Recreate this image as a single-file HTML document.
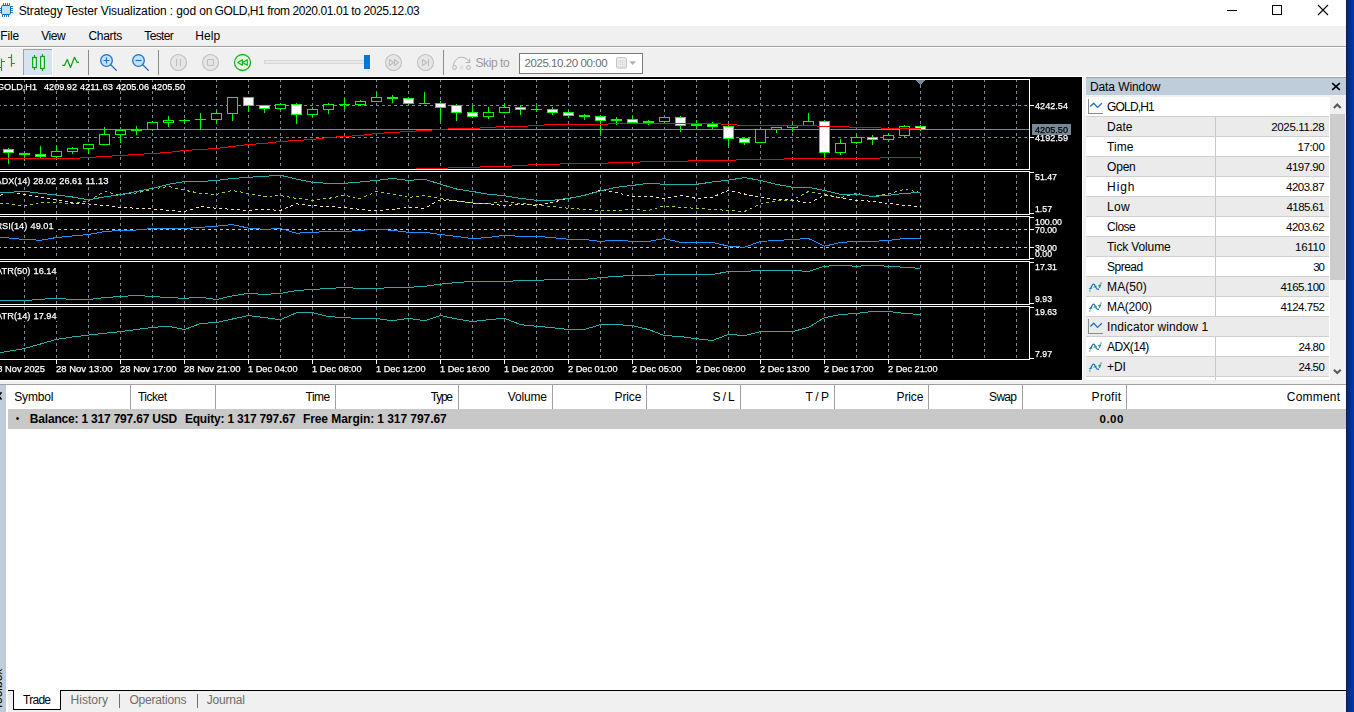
<!DOCTYPE html>
<html lang="en"><head><meta charset="utf-8"><title>Strategy Tester Visualization</title>
<style>
*{box-sizing:border-box;margin:0;padding:0}
html,body{width:1354px;height:712px;overflow:hidden;background:#f0f0f0;font-family:"Liberation Sans",sans-serif;font-size:12px;color:#000}
.a{position:absolute;white-space:nowrap}
.t{position:absolute;white-space:pre;line-height:16px;height:16px;font-size:12px}
#blue{left:1346px;top:0;width:8px;height:712px;background:linear-gradient(90deg,#0f1f4a 0,#0f1f4a 1px,#022a84 1.5px,#0338a2 8px)}
#chart{left:0;top:77px;width:1082px;height:303px;background:#000}
.r{left:1086px;width:243px;height:20px;border-bottom:1px solid #d0d0d0}
.v{width:1px;background:#c8c8c8}
.h{width:1px;height:24px;top:385px;background:#a0a0a0}
</style></head>
<body>
<div class="a" style="left:0px;top:0px;width:1346px;height:26px;background:#fff"></div>
<svg class="a" style="left:0;top:0" width="16" height="20" viewBox="0 0 16 20">
<g fill="none" stroke="#0f66b3" stroke-width="0.9">
<path d="M3.5 3v2M5.500 3v2M7.500 3v2M9.500 3v2M2.500 15v2M4.500 15v2M6.500 15v2M8.500 15v2M11 6.500h2M11 8.500h2M11 10.500h2M11 12.500h2M-1 8.500h2M-1 10.500h2M-1 12.500h2"/>
<rect x="1.500" y="5.500" width="9" height="9" rx="1.200" fill="#bfe0ff" stroke-width="1"/>
</g></svg>
<div class="t" style="left:18.70px;top:3px;letter-spacing:-0.105px">Strategy Tester Visualization : god on</div>
<div class="t" style="left:214.60px;top:3px;letter-spacing:-0.417px">GOLD,H1 from 2020.01.01 to 2025.12.03</div>
<svg class="a" style="left:1220px;top:0" width="126" height="26" viewBox="0 0 126 26" shape-rendering="crispEdges">
<path d="M7 10.5h10" stroke="#000" fill="none"/>
<rect x="52.5" y="5.5" width="9" height="9" stroke="#000" fill="none"/>
<path d="M98 5l10 10M108 5l-10 10" stroke="#000" fill="none" stroke-width="1.1" shape-rendering="geometricPrecision"/>
</svg>
<div class="t" style="left:0.20px;top:28px;letter-spacing:-0.100px">File</div>
<div class="t" style="left:41.20px;top:28px;letter-spacing:-0.400px">View</div>
<div class="t" style="left:88.50px;top:28px;letter-spacing:-0.320px">Charts</div>
<div class="t" style="left:144.30px;top:28px;letter-spacing:-0.660px">Tester</div>
<div class="t" style="left:195.30px;top:28px;letter-spacing:0.100px">Help</div>
<div class="a" style="left:0px;top:46px;width:1346px;height:1px;background:#a0a0a0"></div>
<div class="a" style="left:0px;top:47px;width:1346px;height:1px;background:#fff"></div>
<div class="a" style="left:0px;top:76px;width:1346px;height:1px;background:#fff"></div>
<div class="a" style="left:519px;top:53px;width:124px;height:21px;background:#fff;border:1px solid #7a7a7a"></div>
<svg class="a" style="left:0;top:47px" width="680" height="30" viewBox="0 47 680 30" fill="none">
<!-- bar chart icon -->
<g stroke="#0ea516" stroke-width="1.2">
<path d="M1.5 58.5v12.500M-2 67.500h3.500M1.500 61.500h3.500M11.500 54.300v12.500M8 57.500h3.500M11.500 63.500h3.500"/>
</g>
<!-- selected candle button -->
<rect x="23" y="49" width="29" height="26" fill="#d6e3f1" stroke="none" shape-rendering="crispEdges"/>
<path d="M23.500 75v-25.500h28.500" stroke="#a0a0a0" shape-rendering="crispEdges"/>
<path d="M52.500 49v26.500h-29.500" stroke="#fff" shape-rendering="crispEdges"/>
<g stroke="#0ea516" stroke-width="1.2">
<path d="M34.500 55v2.500M34.500 67.500v2.500M42.500 54v2.500M42.500 68.500v2.500"/>
<rect x="32.600" y="57.500" width="3.800" height="10" fill="#e0f8e0"/>
<rect x="40.600" y="56.500" width="3.800" height="12" fill="#e0f8e0"/>
</g>
<!-- line icon -->
<path d="M62.200 65.400h2.300l2.700-5.800 3.300 8 4-10.300 2.600 5h2" stroke="#0ea516" stroke-width="1.300" stroke-linejoin="round"/>
<!-- separators -->
<g stroke="#8c8c8c" shape-rendering="crispEdges"><path d="M88.500 50v25M158.500 50v25M443.500 50v25"/></g>
<!-- zoom in -->
<g stroke="#1a73c8" stroke-width="1.300">
<circle cx="106.500" cy="60.500" r="5.800" fill="#c4e3fd"/>
<path d="M110.800 64.800l5.600 5.600" stroke-linecap="round"/>
<path d="M103.500 60.500h6M106.500 57.500v6" stroke-width="1.200"/>
<circle cx="138.500" cy="60.500" r="5.800" fill="#c4e3fd"/>
<path d="M142.800 64.800l5.600 5.600" stroke-linecap="round"/>
<path d="M135.500 60.500h6" stroke-width="1.200"/>
</g>
<!-- disabled pause / stop -->
<g stroke="#bebebe" stroke-width="1.100">
<circle cx="178.500" cy="62.500" r="8" fill="#e6e6e6"/>
<path d="M176.500 59v7M180.500 59v7"/>
<circle cx="210.500" cy="62.500" r="8" fill="#e6e6e6"/>
<rect x="207.500" y="59.500" width="6" height="6" rx="1"/>
</g>
<!-- rewind (green) -->
<g stroke="#17b01d" stroke-width="1.100" stroke-linejoin="round">
<circle cx="242.500" cy="62.500" r="8" fill="#e1fae1" stroke-width="1.300"/>
<path d="M242.300 59.700v5.600l-4.600-2.800zM247.300 59.700v5.600l-4.600-2.800z" fill="#d0f5d0"/>
</g>
<!-- slider -->
<rect x="264.500" y="60.500" width="105" height="3" fill="#e7eaea" stroke="#d6d6d6"/>
<rect x="364" y="55" width="6" height="14" fill="#0078d7" shape-rendering="crispEdges"/>
<!-- ff / next disabled -->
<g stroke="#bebebe" stroke-width="1.100" stroke-linejoin="round">
<circle cx="393.500" cy="62.500" r="8" fill="#e6e6e6"/>
<path d="M389.500 59.500v6l4-3zM394.500 59.500v6l4-3z"/>
<circle cx="425.500" cy="62.500" r="8" fill="#e6e6e6"/>
<path d="M422.500 59.500v6l4.500-3zM428.500 59v7"/>
</g>
<!-- skip to icon -->
<g stroke="#b2b2b2" stroke-width="1">
<path d="M453.600 65.300C454 60.500 457.500 57.200 461.500 57.200C465 57.200 467.800 59.300 469.500 62.200"/>
<path d="M469.800 58.500V62.500H465.400"/>
<circle cx="454.500" cy="67.500" r="1.900"/><circle cx="468.500" cy="67.500" r="1.900"/>
<circle cx="461.600" cy="67.500" r="2.200" fill="#e2e2e2" stroke="none"/>
</g>
<!-- calendar icon + arrow -->
<g>
<rect x="616.700" y="57.800" width="9.600" height="10.200" rx="1" fill="#f5f6fb" stroke="#bcb8b8"/>
<rect x="618.200" y="60" width="6.400" height="6.900" fill="#dcdce1"/>
<path d="M619 61.300h1v1h-1zM621 61.300h1v1h-1zM623 61.300h1v1h-1zM619 63.200h1v1h-1zM621 63.200h1v1h-1zM623 63.200h1v1h-1zM619 65.100h1v1h-1zM621 65.100h1v1h-1zM623 65.100h1v1h-1z" fill="#f8f8fc"/>
<path d="M629.200 61.200h6.800l-3.400 3.800z" fill="#b2b2ae"/>
</g>
</svg>

<div class="t" style="left:475.50px;top:55px;letter-spacing:-0.417px;color:#9a9a9a">Skip to</div>
<div class="t" style="left:524.50px;top:55px;letter-spacing:-0.433px;color:#6d6d6d;font-size:11.5px">2025.10.20 00:00</div>
<div id="chart" class="a">
<svg class="a" style="left:0;top:0" width="1082" height="303" viewBox="0 77 1082 303" shape-rendering="crispEdges" font-family="Liberation Sans, sans-serif" font-size="9.600px">
<rect x="0" y="77" width="1082" height="303" fill="#000"/>
<g stroke="#778899" stroke-dasharray="3 3"><line x1="24.5" x2="24.5" y1="80" y2="169" stroke-dashoffset="1"/><line x1="56.5" x2="56.5" y1="80" y2="169" stroke-dashoffset="1"/><line x1="88.5" x2="88.5" y1="80" y2="169" stroke-dashoffset="1"/><line x1="120.5" x2="120.5" y1="80" y2="169" stroke-dashoffset="1"/><line x1="152.5" x2="152.5" y1="80" y2="169" stroke-dashoffset="1"/><line x1="184.5" x2="184.5" y1="80" y2="169" stroke-dashoffset="1"/><line x1="216.5" x2="216.5" y1="80" y2="169" stroke-dashoffset="1"/><line x1="248.5" x2="248.5" y1="80" y2="169" stroke-dashoffset="1"/><line x1="280.5" x2="280.5" y1="80" y2="169" stroke-dashoffset="1"/><line x1="312.5" x2="312.5" y1="80" y2="169" stroke-dashoffset="1"/><line x1="344.5" x2="344.5" y1="80" y2="169" stroke-dashoffset="1"/><line x1="376.5" x2="376.5" y1="80" y2="169" stroke-dashoffset="1"/><line x1="408.5" x2="408.5" y1="80" y2="169" stroke-dashoffset="1"/><line x1="440.5" x2="440.5" y1="80" y2="169" stroke-dashoffset="1"/><line x1="472.5" x2="472.5" y1="80" y2="169" stroke-dashoffset="1"/><line x1="504.5" x2="504.5" y1="80" y2="169" stroke-dashoffset="1"/><line x1="536.5" x2="536.5" y1="80" y2="169" stroke-dashoffset="1"/><line x1="568.5" x2="568.5" y1="80" y2="169" stroke-dashoffset="1"/><line x1="600.5" x2="600.5" y1="80" y2="169" stroke-dashoffset="1"/><line x1="632.5" x2="632.5" y1="80" y2="169" stroke-dashoffset="1"/><line x1="664.5" x2="664.5" y1="80" y2="169" stroke-dashoffset="1"/><line x1="696.5" x2="696.5" y1="80" y2="169" stroke-dashoffset="1"/><line x1="728.5" x2="728.5" y1="80" y2="169" stroke-dashoffset="1"/><line x1="760.5" x2="760.5" y1="80" y2="169" stroke-dashoffset="1"/><line x1="792.5" x2="792.5" y1="80" y2="169" stroke-dashoffset="1"/><line x1="824.5" x2="824.5" y1="80" y2="169" stroke-dashoffset="1"/><line x1="856.5" x2="856.5" y1="80" y2="169" stroke-dashoffset="1"/><line x1="888.5" x2="888.5" y1="80" y2="169" stroke-dashoffset="1"/><line x1="920.5" x2="920.5" y1="80" y2="169" stroke-dashoffset="1"/><line x1="952.5" x2="952.5" y1="80" y2="169" stroke-dashoffset="1"/><line x1="984.5" x2="984.5" y1="80" y2="169" stroke-dashoffset="1"/><line x1="1016.5" x2="1016.5" y1="80" y2="169" stroke-dashoffset="1"/><line x1="24.5" x2="24.5" y1="172" y2="214" stroke-dashoffset="3"/><line x1="56.5" x2="56.5" y1="172" y2="214" stroke-dashoffset="3"/><line x1="88.5" x2="88.5" y1="172" y2="214" stroke-dashoffset="3"/><line x1="120.5" x2="120.5" y1="172" y2="214" stroke-dashoffset="3"/><line x1="152.5" x2="152.5" y1="172" y2="214" stroke-dashoffset="3"/><line x1="184.5" x2="184.5" y1="172" y2="214" stroke-dashoffset="3"/><line x1="216.5" x2="216.5" y1="172" y2="214" stroke-dashoffset="3"/><line x1="248.5" x2="248.5" y1="172" y2="214" stroke-dashoffset="3"/><line x1="280.5" x2="280.5" y1="172" y2="214" stroke-dashoffset="3"/><line x1="312.5" x2="312.5" y1="172" y2="214" stroke-dashoffset="3"/><line x1="344.5" x2="344.5" y1="172" y2="214" stroke-dashoffset="3"/><line x1="376.5" x2="376.5" y1="172" y2="214" stroke-dashoffset="3"/><line x1="408.5" x2="408.5" y1="172" y2="214" stroke-dashoffset="3"/><line x1="440.5" x2="440.5" y1="172" y2="214" stroke-dashoffset="3"/><line x1="472.5" x2="472.5" y1="172" y2="214" stroke-dashoffset="3"/><line x1="504.5" x2="504.5" y1="172" y2="214" stroke-dashoffset="3"/><line x1="536.5" x2="536.5" y1="172" y2="214" stroke-dashoffset="3"/><line x1="568.5" x2="568.5" y1="172" y2="214" stroke-dashoffset="3"/><line x1="600.5" x2="600.5" y1="172" y2="214" stroke-dashoffset="3"/><line x1="632.5" x2="632.5" y1="172" y2="214" stroke-dashoffset="3"/><line x1="664.5" x2="664.5" y1="172" y2="214" stroke-dashoffset="3"/><line x1="696.5" x2="696.5" y1="172" y2="214" stroke-dashoffset="3"/><line x1="728.5" x2="728.5" y1="172" y2="214" stroke-dashoffset="3"/><line x1="760.5" x2="760.5" y1="172" y2="214" stroke-dashoffset="3"/><line x1="792.5" x2="792.5" y1="172" y2="214" stroke-dashoffset="3"/><line x1="824.5" x2="824.5" y1="172" y2="214" stroke-dashoffset="3"/><line x1="856.5" x2="856.5" y1="172" y2="214" stroke-dashoffset="3"/><line x1="888.5" x2="888.5" y1="172" y2="214" stroke-dashoffset="3"/><line x1="920.5" x2="920.5" y1="172" y2="214" stroke-dashoffset="3"/><line x1="952.5" x2="952.5" y1="172" y2="214" stroke-dashoffset="3"/><line x1="984.5" x2="984.5" y1="172" y2="214" stroke-dashoffset="3"/><line x1="1016.5" x2="1016.5" y1="172" y2="214" stroke-dashoffset="3"/><line x1="24.5" x2="24.5" y1="217" y2="259" stroke-dashoffset="0"/><line x1="56.5" x2="56.5" y1="217" y2="259" stroke-dashoffset="0"/><line x1="88.5" x2="88.5" y1="217" y2="259" stroke-dashoffset="0"/><line x1="120.5" x2="120.5" y1="217" y2="259" stroke-dashoffset="0"/><line x1="152.5" x2="152.5" y1="217" y2="259" stroke-dashoffset="0"/><line x1="184.5" x2="184.5" y1="217" y2="259" stroke-dashoffset="0"/><line x1="216.5" x2="216.5" y1="217" y2="259" stroke-dashoffset="0"/><line x1="248.5" x2="248.5" y1="217" y2="259" stroke-dashoffset="0"/><line x1="280.5" x2="280.5" y1="217" y2="259" stroke-dashoffset="0"/><line x1="312.5" x2="312.5" y1="217" y2="259" stroke-dashoffset="0"/><line x1="344.5" x2="344.5" y1="217" y2="259" stroke-dashoffset="0"/><line x1="376.5" x2="376.5" y1="217" y2="259" stroke-dashoffset="0"/><line x1="408.5" x2="408.5" y1="217" y2="259" stroke-dashoffset="0"/><line x1="440.5" x2="440.5" y1="217" y2="259" stroke-dashoffset="0"/><line x1="472.5" x2="472.5" y1="217" y2="259" stroke-dashoffset="0"/><line x1="504.5" x2="504.5" y1="217" y2="259" stroke-dashoffset="0"/><line x1="536.5" x2="536.5" y1="217" y2="259" stroke-dashoffset="0"/><line x1="568.5" x2="568.5" y1="217" y2="259" stroke-dashoffset="0"/><line x1="600.5" x2="600.5" y1="217" y2="259" stroke-dashoffset="0"/><line x1="632.5" x2="632.5" y1="217" y2="259" stroke-dashoffset="0"/><line x1="664.5" x2="664.5" y1="217" y2="259" stroke-dashoffset="0"/><line x1="696.5" x2="696.5" y1="217" y2="259" stroke-dashoffset="0"/><line x1="728.5" x2="728.5" y1="217" y2="259" stroke-dashoffset="0"/><line x1="760.5" x2="760.5" y1="217" y2="259" stroke-dashoffset="0"/><line x1="792.5" x2="792.5" y1="217" y2="259" stroke-dashoffset="0"/><line x1="824.5" x2="824.5" y1="217" y2="259" stroke-dashoffset="0"/><line x1="856.5" x2="856.5" y1="217" y2="259" stroke-dashoffset="0"/><line x1="888.5" x2="888.5" y1="217" y2="259" stroke-dashoffset="0"/><line x1="920.5" x2="920.5" y1="217" y2="259" stroke-dashoffset="0"/><line x1="952.5" x2="952.5" y1="217" y2="259" stroke-dashoffset="0"/><line x1="984.5" x2="984.5" y1="217" y2="259" stroke-dashoffset="0"/><line x1="1016.5" x2="1016.5" y1="217" y2="259" stroke-dashoffset="0"/><line x1="24.5" x2="24.5" y1="262" y2="304" stroke-dashoffset="3"/><line x1="56.5" x2="56.5" y1="262" y2="304" stroke-dashoffset="3"/><line x1="88.5" x2="88.5" y1="262" y2="304" stroke-dashoffset="3"/><line x1="120.5" x2="120.5" y1="262" y2="304" stroke-dashoffset="3"/><line x1="152.5" x2="152.5" y1="262" y2="304" stroke-dashoffset="3"/><line x1="184.5" x2="184.5" y1="262" y2="304" stroke-dashoffset="3"/><line x1="216.5" x2="216.5" y1="262" y2="304" stroke-dashoffset="3"/><line x1="248.5" x2="248.5" y1="262" y2="304" stroke-dashoffset="3"/><line x1="280.5" x2="280.5" y1="262" y2="304" stroke-dashoffset="3"/><line x1="312.5" x2="312.5" y1="262" y2="304" stroke-dashoffset="3"/><line x1="344.5" x2="344.5" y1="262" y2="304" stroke-dashoffset="3"/><line x1="376.5" x2="376.5" y1="262" y2="304" stroke-dashoffset="3"/><line x1="408.5" x2="408.5" y1="262" y2="304" stroke-dashoffset="3"/><line x1="440.5" x2="440.5" y1="262" y2="304" stroke-dashoffset="3"/><line x1="472.5" x2="472.5" y1="262" y2="304" stroke-dashoffset="3"/><line x1="504.5" x2="504.5" y1="262" y2="304" stroke-dashoffset="3"/><line x1="536.5" x2="536.5" y1="262" y2="304" stroke-dashoffset="3"/><line x1="568.5" x2="568.5" y1="262" y2="304" stroke-dashoffset="3"/><line x1="600.5" x2="600.5" y1="262" y2="304" stroke-dashoffset="3"/><line x1="632.5" x2="632.5" y1="262" y2="304" stroke-dashoffset="3"/><line x1="664.5" x2="664.5" y1="262" y2="304" stroke-dashoffset="3"/><line x1="696.5" x2="696.5" y1="262" y2="304" stroke-dashoffset="3"/><line x1="728.5" x2="728.5" y1="262" y2="304" stroke-dashoffset="3"/><line x1="760.5" x2="760.5" y1="262" y2="304" stroke-dashoffset="3"/><line x1="792.5" x2="792.5" y1="262" y2="304" stroke-dashoffset="3"/><line x1="824.5" x2="824.5" y1="262" y2="304" stroke-dashoffset="3"/><line x1="856.5" x2="856.5" y1="262" y2="304" stroke-dashoffset="3"/><line x1="888.5" x2="888.5" y1="262" y2="304" stroke-dashoffset="3"/><line x1="920.5" x2="920.5" y1="262" y2="304" stroke-dashoffset="3"/><line x1="952.5" x2="952.5" y1="262" y2="304" stroke-dashoffset="3"/><line x1="984.5" x2="984.5" y1="262" y2="304" stroke-dashoffset="3"/><line x1="1016.5" x2="1016.5" y1="262" y2="304" stroke-dashoffset="3"/><line x1="24.5" x2="24.5" y1="307" y2="359" stroke-dashoffset="0"/><line x1="56.5" x2="56.5" y1="307" y2="359" stroke-dashoffset="0"/><line x1="88.5" x2="88.5" y1="307" y2="359" stroke-dashoffset="0"/><line x1="120.5" x2="120.5" y1="307" y2="359" stroke-dashoffset="0"/><line x1="152.5" x2="152.5" y1="307" y2="359" stroke-dashoffset="0"/><line x1="184.5" x2="184.5" y1="307" y2="359" stroke-dashoffset="0"/><line x1="216.5" x2="216.5" y1="307" y2="359" stroke-dashoffset="0"/><line x1="248.5" x2="248.5" y1="307" y2="359" stroke-dashoffset="0"/><line x1="280.5" x2="280.5" y1="307" y2="359" stroke-dashoffset="0"/><line x1="312.5" x2="312.5" y1="307" y2="359" stroke-dashoffset="0"/><line x1="344.5" x2="344.5" y1="307" y2="359" stroke-dashoffset="0"/><line x1="376.5" x2="376.5" y1="307" y2="359" stroke-dashoffset="0"/><line x1="408.5" x2="408.5" y1="307" y2="359" stroke-dashoffset="0"/><line x1="440.5" x2="440.5" y1="307" y2="359" stroke-dashoffset="0"/><line x1="472.5" x2="472.5" y1="307" y2="359" stroke-dashoffset="0"/><line x1="504.5" x2="504.5" y1="307" y2="359" stroke-dashoffset="0"/><line x1="536.5" x2="536.5" y1="307" y2="359" stroke-dashoffset="0"/><line x1="568.5" x2="568.5" y1="307" y2="359" stroke-dashoffset="0"/><line x1="600.5" x2="600.5" y1="307" y2="359" stroke-dashoffset="0"/><line x1="632.5" x2="632.5" y1="307" y2="359" stroke-dashoffset="0"/><line x1="664.5" x2="664.5" y1="307" y2="359" stroke-dashoffset="0"/><line x1="696.5" x2="696.5" y1="307" y2="359" stroke-dashoffset="0"/><line x1="728.5" x2="728.5" y1="307" y2="359" stroke-dashoffset="0"/><line x1="760.5" x2="760.5" y1="307" y2="359" stroke-dashoffset="0"/><line x1="792.5" x2="792.5" y1="307" y2="359" stroke-dashoffset="0"/><line x1="824.5" x2="824.5" y1="307" y2="359" stroke-dashoffset="0"/><line x1="856.5" x2="856.5" y1="307" y2="359" stroke-dashoffset="0"/><line x1="888.5" x2="888.5" y1="307" y2="359" stroke-dashoffset="0"/><line x1="920.5" x2="920.5" y1="307" y2="359" stroke-dashoffset="0"/><line x1="952.5" x2="952.5" y1="307" y2="359" stroke-dashoffset="0"/><line x1="984.5" x2="984.5" y1="307" y2="359" stroke-dashoffset="0"/><line x1="1016.5" x2="1016.5" y1="307" y2="359" stroke-dashoffset="0"/></g>
<g stroke="#778899" stroke-dasharray="3 3"><line x1="0" x2="1029" y1="105.5" y2="105.5" stroke-dashoffset="2"/><line x1="0" x2="1029" y1="137.5" y2="137.5" stroke-dashoffset="2"/></g>
<g stroke="#c0c0c0" stroke-dasharray="3 3"><line x1="0" x2="1029" y1="229.5" y2="229.5" stroke-dashoffset="2"/><line x1="0" x2="1029" y1="247.5" y2="247.5" stroke-dashoffset="2"/></g>
<path d="M0 129.5H1029" stroke="#778899" fill="none"/>
<path d="M416 168.5H448M448 167.5H480M480 166.5H512M512 165.5H528M528 164.5H560M560 163.5H608M608 162.5H640M640 161.5H688M688 160.5H736M736 159.5H784M784 158.5H880M880 157.5H921" stroke="#ff0000" fill="none"/>
<rect x="8" y="148" width="1" height="16" fill="#00ff00"/><rect x="3" y="149" width="11" height="4" fill="#00ff00"/><rect x="4" y="150" width="9" height="2" fill="#fff"/><rect x="24" y="153" width="1" height="8" fill="#00ff00"/><rect x="19" y="153" width="11" height="2" fill="#00ff00"/><rect x="40" y="146" width="1" height="12" fill="#00ff00"/><rect x="35" y="154" width="11" height="3" fill="#00ff00"/><rect x="36" y="155" width="9" height="1" fill="#fff"/><rect x="56" y="146" width="1" height="12" fill="#00ff00"/><rect x="51" y="151" width="11" height="6" fill="#00ff00"/><rect x="52" y="152" width="9" height="4" fill="#000"/><rect x="72" y="147" width="1" height="7" fill="#00ff00"/><rect x="67" y="148" width="11" height="4" fill="#00ff00"/><rect x="68" y="149" width="9" height="2" fill="#000"/><rect x="88" y="144" width="1" height="10" fill="#00ff00"/><rect x="83" y="144" width="11" height="5" fill="#00ff00"/><rect x="84" y="145" width="9" height="3" fill="#000"/><rect x="104" y="127" width="1" height="18" fill="#00ff00"/><rect x="99" y="134" width="11" height="11" fill="#00ff00"/><rect x="100" y="135" width="9" height="9" fill="#000"/><rect x="120" y="130" width="1" height="13" fill="#00ff00"/><rect x="115" y="130" width="11" height="5" fill="#00ff00"/><rect x="116" y="131" width="9" height="3" fill="#000"/><rect x="136" y="126" width="1" height="9" fill="#00ff00"/><rect x="131" y="129" width="11" height="2" fill="#00ff00"/><rect x="152" y="121" width="1" height="10" fill="#00ff00"/><rect x="147" y="122" width="11" height="8" fill="#00ff00"/><rect x="148" y="123" width="9" height="6" fill="#000"/><rect x="168" y="116" width="1" height="11" fill="#00ff00"/><rect x="163" y="120" width="11" height="3" fill="#00ff00"/><rect x="164" y="121" width="9" height="1" fill="#000"/><rect x="184" y="119" width="1" height="5" fill="#00ff00"/><rect x="179" y="120" width="11" height="1" fill="#00ff00"/><rect x="200" y="113" width="1" height="17" fill="#00ff00"/><rect x="195" y="119" width="11" height="1" fill="#00ff00"/><rect x="216" y="111" width="1" height="12" fill="#00ff00"/><rect x="211" y="113" width="11" height="7" fill="#00ff00"/><rect x="212" y="114" width="9" height="5" fill="#000"/><rect x="232" y="97" width="1" height="24" fill="#00ff00"/><rect x="227" y="97" width="11" height="17" fill="#00ff00"/><rect x="228" y="98" width="9" height="15" fill="#000"/><rect x="248" y="97" width="1" height="15" fill="#00ff00"/><rect x="243" y="97" width="11" height="9" fill="#00ff00"/><rect x="244" y="98" width="9" height="7" fill="#fff"/><rect x="264" y="105" width="1" height="8" fill="#00ff00"/><rect x="259" y="105" width="11" height="4" fill="#00ff00"/><rect x="260" y="106" width="9" height="2" fill="#fff"/><rect x="280" y="103" width="1" height="7" fill="#00ff00"/><rect x="275" y="104" width="11" height="5" fill="#00ff00"/><rect x="276" y="105" width="9" height="3" fill="#000"/><rect x="296" y="103" width="1" height="21" fill="#00ff00"/><rect x="291" y="104" width="11" height="11" fill="#00ff00"/><rect x="292" y="105" width="9" height="9" fill="#fff"/><rect x="312" y="107" width="1" height="10" fill="#00ff00"/><rect x="307" y="109" width="11" height="6" fill="#00ff00"/><rect x="308" y="110" width="9" height="4" fill="#000"/><rect x="328" y="103" width="1" height="11" fill="#00ff00"/><rect x="323" y="104" width="11" height="6" fill="#00ff00"/><rect x="324" y="105" width="9" height="4" fill="#000"/><rect x="344" y="98" width="1" height="11" fill="#00ff00"/><rect x="339" y="104" width="11" height="1" fill="#00ff00"/><rect x="360" y="100" width="1" height="6" fill="#00ff00"/><rect x="355" y="101" width="11" height="4" fill="#00ff00"/><rect x="356" y="102" width="9" height="2" fill="#000"/><rect x="376" y="93" width="1" height="9" fill="#00ff00"/><rect x="371" y="97" width="11" height="5" fill="#00ff00"/><rect x="372" y="98" width="9" height="3" fill="#000"/><rect x="392" y="95" width="1" height="8" fill="#00ff00"/><rect x="387" y="97" width="11" height="2" fill="#00ff00"/><rect x="408" y="97" width="1" height="8" fill="#00ff00"/><rect x="403" y="98" width="11" height="6" fill="#00ff00"/><rect x="404" y="99" width="9" height="4" fill="#fff"/><rect x="424" y="92" width="1" height="12" fill="#00ff00"/><rect x="419" y="103" width="11" height="1" fill="#00ff00"/><rect x="440" y="101" width="1" height="20" fill="#00ff00"/><rect x="435" y="103" width="11" height="5" fill="#00ff00"/><rect x="436" y="104" width="9" height="3" fill="#fff"/><rect x="456" y="104" width="1" height="17" fill="#00ff00"/><rect x="451" y="105" width="11" height="8" fill="#00ff00"/><rect x="452" y="106" width="9" height="6" fill="#fff"/><rect x="472" y="106" width="1" height="12" fill="#00ff00"/><rect x="467" y="112" width="11" height="5" fill="#00ff00"/><rect x="468" y="113" width="9" height="3" fill="#fff"/><rect x="488" y="107" width="1" height="12" fill="#00ff00"/><rect x="483" y="112" width="11" height="5" fill="#00ff00"/><rect x="484" y="113" width="9" height="3" fill="#000"/><rect x="504" y="103" width="1" height="10" fill="#00ff00"/><rect x="499" y="107" width="11" height="6" fill="#00ff00"/><rect x="500" y="108" width="9" height="4" fill="#000"/><rect x="520" y="105" width="1" height="10" fill="#00ff00"/><rect x="515" y="107" width="11" height="3" fill="#00ff00"/><rect x="516" y="108" width="9" height="1" fill="#fff"/><rect x="536" y="106" width="1" height="6" fill="#00ff00"/><rect x="531" y="109" width="11" height="1" fill="#00ff00"/><rect x="552" y="107" width="1" height="8" fill="#00ff00"/><rect x="547" y="109" width="11" height="4" fill="#00ff00"/><rect x="548" y="110" width="9" height="2" fill="#fff"/><rect x="568" y="110" width="1" height="8" fill="#00ff00"/><rect x="563" y="112" width="11" height="4" fill="#00ff00"/><rect x="564" y="113" width="9" height="2" fill="#fff"/><rect x="584" y="114" width="1" height="6" fill="#00ff00"/><rect x="579" y="115" width="11" height="2" fill="#00ff00"/><rect x="600" y="116" width="1" height="18" fill="#00ff00"/><rect x="595" y="116" width="11" height="5" fill="#00ff00"/><rect x="596" y="117" width="9" height="3" fill="#fff"/><rect x="616" y="117" width="1" height="8" fill="#00ff00"/><rect x="611" y="119" width="11" height="2" fill="#00ff00"/><rect x="632" y="116" width="1" height="7" fill="#00ff00"/><rect x="627" y="119" width="11" height="4" fill="#00ff00"/><rect x="628" y="120" width="9" height="2" fill="#fff"/><rect x="648" y="120" width="1" height="5" fill="#00ff00"/><rect x="643" y="121" width="11" height="2" fill="#00ff00"/><rect x="664" y="117" width="1" height="6" fill="#00ff00"/><rect x="659" y="117" width="11" height="5" fill="#00ff00"/><rect x="660" y="118" width="9" height="3" fill="#000"/><rect x="680" y="116" width="1" height="16" fill="#00ff00"/><rect x="675" y="117" width="11" height="9" fill="#00ff00"/><rect x="676" y="118" width="9" height="7" fill="#fff"/><rect x="696" y="120" width="1" height="9" fill="#00ff00"/><rect x="691" y="124" width="11" height="2" fill="#00ff00"/><rect x="712" y="122" width="1" height="7" fill="#00ff00"/><rect x="707" y="124" width="11" height="3" fill="#00ff00"/><rect x="708" y="125" width="9" height="1" fill="#fff"/><rect x="728" y="125" width="1" height="21" fill="#00ff00"/><rect x="723" y="126" width="11" height="13" fill="#00ff00"/><rect x="724" y="127" width="9" height="11" fill="#fff"/><rect x="744" y="138" width="1" height="7" fill="#00ff00"/><rect x="739" y="138" width="11" height="5" fill="#00ff00"/><rect x="740" y="139" width="9" height="3" fill="#fff"/><rect x="760" y="129" width="1" height="14" fill="#00ff00"/><rect x="755" y="129" width="11" height="14" fill="#00ff00"/><rect x="756" y="130" width="9" height="12" fill="#000"/><rect x="776" y="127" width="1" height="6" fill="#00ff00"/><rect x="771" y="127" width="11" height="3" fill="#00ff00"/><rect x="772" y="128" width="9" height="1" fill="#000"/><rect x="792" y="123" width="1" height="9" fill="#00ff00"/><rect x="787" y="125" width="11" height="3" fill="#00ff00"/><rect x="788" y="126" width="9" height="1" fill="#000"/><rect x="808" y="113" width="1" height="13" fill="#00ff00"/><rect x="803" y="121" width="11" height="5" fill="#00ff00"/><rect x="804" y="122" width="9" height="3" fill="#000"/><rect x="824" y="120" width="1" height="38" fill="#00ff00"/><rect x="819" y="121" width="11" height="32" fill="#00ff00"/><rect x="820" y="122" width="9" height="30" fill="#fff"/><rect x="840" y="139" width="1" height="16" fill="#00ff00"/><rect x="835" y="143" width="11" height="10" fill="#00ff00"/><rect x="836" y="144" width="9" height="8" fill="#000"/><rect x="856" y="135" width="1" height="9" fill="#00ff00"/><rect x="851" y="137" width="11" height="6" fill="#00ff00"/><rect x="852" y="138" width="9" height="4" fill="#000"/><rect x="872" y="135" width="1" height="10" fill="#00ff00"/><rect x="867" y="137" width="11" height="3" fill="#00ff00"/><rect x="868" y="138" width="9" height="1" fill="#fff"/><rect x="888" y="133" width="1" height="8" fill="#00ff00"/><rect x="883" y="135" width="11" height="5" fill="#00ff00"/><rect x="884" y="136" width="9" height="3" fill="#000"/><rect x="904" y="125" width="1" height="12" fill="#00ff00"/><rect x="899" y="126" width="11" height="10" fill="#00ff00"/><rect x="900" y="127" width="9" height="8" fill="#000"/><rect x="920" y="125" width="1" height="6" fill="#00ff00"/><rect x="915" y="126" width="11" height="4" fill="#00ff00"/><rect x="916" y="127" width="9" height="2" fill="#fff"/>
<path d="M0 158.5H80M80 157.5H96M96 156.5H112M112 155.5H128M128 154.5H144M144 153.5H160M160 152.5H172M172 151.5H180M180 150.5H192M192 149.5H208M208 148.5H220M220 147.5H228M228 146.5H236M236 145.5H244M244 144.5H256M256 143.5H268M268 142.5H276M276 141.5H288M288 140.5H304M304 139.5H316M316 138.5H324M324 137.5H336M336 136.5H352M352 135.5H364M364 134.5H372M372 133.5H384M384 132.5H400M400 131.5H416M416 130.5H432M432 129.5H448M448 128.5H480M480 127.5H496M496 126.5H528M528 125.5H544M544 124.5H608M608 123.5H721M721 124.5H737M737 125.5H817M817 126.5H849M849 127.5H881M881 128.5H921" stroke="#ff0000" fill="none"/>
<polyline points="0,195.3 8.5,192 24.5,194.6 40.5,197 56.5,199.5 72.5,202.7 88.5,204 104.5,205.5 120.5,207.5 136.5,208.2 152.5,209 168.5,210.5 184.5,211.5 200.5,206.7 216.5,208.3 232.5,209.4 248.5,210.4 264.5,209.4 280.5,210.4 296.5,203.9 312.5,205.4 328.5,206.7 344.5,207.5 360.5,209.4 376.5,210.7 392.5,209.4 408.5,207.5 424.5,208.3 440.5,199.7 456.5,201 472.5,203.1 488.5,204 504.5,205.6 520.5,204.1 536.5,205.6 552.5,202.2 568.5,198.4 584.5,195.3 600.5,190.2 616.5,192.7 632.5,196.3 648.5,196.5 664.5,198.4 680.5,195.3 696.5,198.4 712.5,197.2 728.5,190.2 744.5,194 760.5,197.2 776.5,199.7 792.5,200 808.5,203.1 824.5,195.3 840.5,198 856.5,200.3 872.5,201.3 888.5,203.5 904.5,205.4 920.5,206.7" stroke="#f5deb3" fill="none" stroke-dasharray="3 3"/>
<polyline points="0,203 8.5,203.5 24.5,206 40.5,202.5 56.5,202 72.5,204 88.5,200.5 104.5,191.5 120.5,195 136.5,193 152.5,189 168.5,186.4 184.5,190.2 200.5,193.4 216.5,194.4 232.5,190.5 248.5,193.4 264.5,196.5 280.5,195.5 296.5,198.4 312.5,200.3 328.5,198.4 344.5,195.3 360.5,198.4 376.5,191.5 392.5,194 408.5,197.4 424.5,195.5 440.5,198.4 456.5,201 472.5,202.9 488.5,203.9 504.5,201.2 520.5,203.5 536.5,204.8 552.5,206.7 568.5,208.3 584.5,209.4 600.5,210.4 616.5,210.4 632.5,209.4 648.5,210.4 664.5,205.8 680.5,207.5 696.5,208.3 712.5,209.4 728.5,210.4 744.5,211.5 760.5,204.1 776.5,201 792.5,200 808.5,191.5 824.5,194.6 840.5,197.8 856.5,193.4 872.5,196.5 888.5,194 904.5,189.3 920.5,192.5" stroke="#9acd32" fill="none" stroke-dasharray="3 3"/>
<polyline points="0,192.7 8.5,192.4 24.5,191.3 40.5,193.3 56.5,195 72.5,197 88.5,199.7 104.5,197 120.5,194.6 136.5,191.5 152.5,188.3 168.5,184.3 184.5,181.6 200.5,181.6 216.5,180.4 232.5,178.5 248.5,177.3 264.5,176.3 280.5,175.3 296.5,179.1 312.5,182.4 328.5,183.3 344.5,183.3 360.5,182 376.5,180.4 392.5,178.5 408.5,180.4 424.5,179.2 440.5,184.2 456.5,189 472.5,191.5 488.5,194.2 504.5,195.7 520.5,198.4 536.5,200.3 552.5,200.3 568.5,198.4 584.5,195.3 600.5,190.9 616.5,187.3 632.5,185.4 648.5,183.3 664.5,184.3 680.5,184.3 696.5,184.3 712.5,182 728.5,180.1 744.5,177.6 760.5,180.4 776.5,184.3 792.5,187.3 808.5,187.3 824.5,190.5 840.5,194.3 856.5,194.3 872.5,196.5 888.5,195.3 904.5,193.4 920.5,192.5" stroke="#20b2aa" fill="none" />
<polyline points="0,237.4 8.5,238 24.5,239.5 40.5,240.2 56.5,237.5 72.5,236 88.5,234.5 104.5,231.6 120.5,230.4 136.5,230 152.5,228.5 168.5,228.5 184.5,228.5 200.5,227.3 216.5,226.2 232.5,224.6 248.5,228.1 264.5,229.4 280.5,228.5 296.5,233.2 312.5,232.3 328.5,231.6 344.5,231.6 360.5,230.3 376.5,229.2 392.5,230.3 408.5,232.3 424.5,232.3 440.5,234.5 456.5,236.4 472.5,238.6 488.5,237.5 504.5,235.3 520.5,236.4 536.5,236.4 552.5,237.6 568.5,239.3 584.5,239.5 600.5,241.4 616.5,240.1 632.5,241.4 648.5,241.4 664.5,238.6 680.5,242.4 696.5,242.4 712.5,242.4 728.5,246.2 744.5,247.3 760.5,241.4 776.5,240.5 792.5,239.5 808.5,238.5 824.5,246.2 840.5,242.4 856.5,241.4 872.5,241.4 888.5,240.5 904.5,238.5 920.5,238.5" stroke="#1e90ff" fill="none" />
<polyline points="0,300.7 8.5,300.7 24.5,300.7 40.5,299.3 56.5,298.2 72.5,299.6 88.5,299.6 104.5,297.6 120.5,296.5 136.5,295.4 152.5,296.5 168.5,297.6 184.5,298.3 200.5,297.2 216.5,299.6 232.5,295.8 248.5,293.4 264.5,294.4 280.5,293.4 296.5,290.5 312.5,289.5 328.5,288.5 344.5,287.4 360.5,288.5 376.5,288.5 392.5,287.4 408.5,287.4 424.5,286.3 440.5,284.2 456.5,282.5 472.5,281.5 488.5,281.5 504.5,281.5 520.5,280.6 536.5,280.6 552.5,279.4 568.5,279.4 584.5,279.4 600.5,277.6 616.5,276.4 632.5,275.4 648.5,275.4 664.5,274.5 680.5,274.5 696.5,274.5 712.5,274.5 728.5,271.5 744.5,271.5 760.5,270.3 776.5,270.3 792.5,270.3 808.5,271.5 824.5,266.3 840.5,265.3 856.5,266.3 872.5,265.3 888.5,266.3 904.5,267.3 920.5,268.4" stroke="#20b2aa" fill="none" />
<polyline points="0,352.7 8.5,351.3 24.5,348.5 40.5,344 56.5,339.4 72.5,337 88.5,335.1 104.5,333.3 120.5,331.6 136.5,329.5 152.5,327.4 168.5,326.3 184.5,329.5 200.5,323.5 216.5,322.5 232.5,319 248.5,315.5 264.5,317.6 280.5,319.7 296.5,312.7 312.5,312.7 328.5,316.6 344.5,317.6 360.5,318.6 376.5,318.6 392.5,320.7 408.5,318.3 424.5,320.7 440.5,315.5 456.5,319 472.5,321.5 488.5,319.7 504.5,318.3 520.5,324.6 536.5,326.3 552.5,327.7 568.5,329.5 584.5,329.5 600.5,324.6 616.5,324.6 632.5,325.6 648.5,329.5 664.5,335.6 680.5,336.5 696.5,338.7 712.5,340.5 728.5,334.4 744.5,335.6 760.5,331.6 776.5,331.6 792.5,331.6 808.5,327.4 824.5,317.6 840.5,314.5 856.5,313.4 872.5,311.5 888.5,311.5 904.5,313.4 920.5,314.5" stroke="#20b2aa" fill="none" />
<path d="M0 79.5H1030M0 169.5H1030M1029.5 79V170M0 171.5H1030M0 214.5H1030M1029.5 171V215M0 216.5H1030M0 259.5H1030M1029.5 216V260M0 261.5H1030M0 304.5H1030M1029.5 261V305M0 306.5H1030M0 359.5H1030M1029.5 306V360" stroke="#fff" fill="none"/>
<path d="M916 80h9v1h-1v1h-1v1h-1v1h-1v1h-1v-1h-1v-1h-1v-1h-1v-1h-1z" fill="#778899"/>
<path d="M1030 105.5h4M1030 137.5h4M1030 172.5h4M1030 213.5h4M1030 217.5h4M1030 229.5h4M1030 247.5h4M1030 258.5h4M1030 262.5h4M1030 303.5h4M1030 307.5h4M1030 358.5h4" stroke="#fff" fill="none"/>
<rect x="1032" y="124" width="39" height="11" fill="#778899"/>
<path d="M-7.5 360v4M56.5 360v4M120.5 360v4M184.5 360v4M248.5 360v4M312.5 360v4M376.5 360v4M440.5 360v4M504.5 360v4M568.5 360v4M632.5 360v4M696.5 360v4M760.5 360v4M824.5 360v4M888.5 360v4" stroke="#fff" fill="none"/>
<rect x="0" y="175" width="109" height="11" fill="#000"/>
<rect x="0" y="220" width="57" height="11" fill="#000"/>
<rect x="0" y="265" width="58" height="11" fill="#000"/>
<rect x="0" y="310" width="58" height="11" fill="#000"/>
</svg>
<svg class="a" style="left:0;top:0;filter:grayscale(1)" width="1082" height="303" viewBox="0 77.200 1082 303" font-family="Liberation Sans, sans-serif" font-size="9.800px" stroke-width="0.250">
<text x="1035" y="109" fill="#fff" stroke="#fff" textLength="33" lengthAdjust="spacingAndGlyphs">4242.54</text>
<text x="1035" y="141" fill="#fff" stroke="#fff" textLength="33" lengthAdjust="spacingAndGlyphs">4192.59</text>
<text x="1035" y="180" fill="#fff" stroke="#fff" textLength="22" lengthAdjust="spacingAndGlyphs">51.47</text>
<text x="1035" y="212" fill="#fff" stroke="#fff" textLength="17" lengthAdjust="spacingAndGlyphs">1.57</text>
<text x="1035" y="225" fill="#fff" stroke="#fff" textLength="27" lengthAdjust="spacingAndGlyphs">100.00</text>
<text x="1035" y="233" fill="#fff" stroke="#fff" textLength="22" lengthAdjust="spacingAndGlyphs">70.00</text>
<text x="1035" y="251" fill="#fff" stroke="#fff" textLength="22" lengthAdjust="spacingAndGlyphs">30.00</text>
<text x="1035" y="257" fill="#fff" stroke="#fff" textLength="17" lengthAdjust="spacingAndGlyphs">0.00</text>
<text x="1035" y="270" fill="#fff" stroke="#fff" textLength="22" lengthAdjust="spacingAndGlyphs">17.31</text>
<text x="1035" y="302" fill="#fff" stroke="#fff" textLength="17" lengthAdjust="spacingAndGlyphs">9.93</text>
<text x="1035" y="315" fill="#fff" stroke="#fff" textLength="22" lengthAdjust="spacingAndGlyphs">19.63</text>
<text x="1035" y="357" fill="#fff" stroke="#fff" textLength="17" lengthAdjust="spacingAndGlyphs">7.97</text>
<text x="1035" y="133" fill="#000" stroke="#000" textLength="33" lengthAdjust="spacingAndGlyphs">4205.50</text>
<text x="-8" y="372.2" fill="#fff" stroke="#fff" textLength="53" lengthAdjust="spacingAndGlyphs">28 Nov 2025</text>
<text x="56" y="372.2" fill="#fff" stroke="#fff" textLength="56.5" lengthAdjust="spacingAndGlyphs">28 Nov 13:00</text>
<text x="120" y="372.2" fill="#fff" stroke="#fff" textLength="56.5" lengthAdjust="spacingAndGlyphs">28 Nov 17:00</text>
<text x="184" y="372.2" fill="#fff" stroke="#fff" textLength="56.5" lengthAdjust="spacingAndGlyphs">28 Nov 21:00</text>
<text x="248" y="372.2" fill="#fff" stroke="#fff" textLength="49.5" lengthAdjust="spacingAndGlyphs">1 Dec 04:00</text>
<text x="312" y="372.2" fill="#fff" stroke="#fff" textLength="49.5" lengthAdjust="spacingAndGlyphs">1 Dec 08:00</text>
<text x="376" y="372.2" fill="#fff" stroke="#fff" textLength="49.5" lengthAdjust="spacingAndGlyphs">1 Dec 12:00</text>
<text x="440" y="372.2" fill="#fff" stroke="#fff" textLength="49.5" lengthAdjust="spacingAndGlyphs">1 Dec 16:00</text>
<text x="504" y="372.2" fill="#fff" stroke="#fff" textLength="49.5" lengthAdjust="spacingAndGlyphs">1 Dec 20:00</text>
<text x="568" y="372.2" fill="#fff" stroke="#fff" textLength="49.5" lengthAdjust="spacingAndGlyphs">2 Dec 01:00</text>
<text x="632" y="372.2" fill="#fff" stroke="#fff" textLength="49.5" lengthAdjust="spacingAndGlyphs">2 Dec 05:00</text>
<text x="696" y="372.2" fill="#fff" stroke="#fff" textLength="49.5" lengthAdjust="spacingAndGlyphs">2 Dec 09:00</text>
<text x="760" y="372.2" fill="#fff" stroke="#fff" textLength="49.5" lengthAdjust="spacingAndGlyphs">2 Dec 13:00</text>
<text x="824" y="372.2" fill="#fff" stroke="#fff" textLength="49.5" lengthAdjust="spacingAndGlyphs">2 Dec 17:00</text>
<text x="888" y="372.2" fill="#fff" stroke="#fff" textLength="49.5" lengthAdjust="spacingAndGlyphs">2 Dec 21:00</text>
<text x="-3" y="90" fill="#fff" stroke="#fff" textLength="40" lengthAdjust="spacingAndGlyphs">GOLD,H1</text>
<text x="44" y="90" fill="#fff" stroke="#fff" textLength="33" lengthAdjust="spacingAndGlyphs">4209.92</text>
<text x="80" y="90" fill="#fff" stroke="#fff" textLength="33" lengthAdjust="spacingAndGlyphs">4211.63</text>
<text x="116" y="90" fill="#fff" stroke="#fff" textLength="33" lengthAdjust="spacingAndGlyphs">4205.06</text>
<text x="152" y="90" fill="#fff" stroke="#fff" textLength="33" lengthAdjust="spacingAndGlyphs">4205.50</text>
<text x="-4.4" y="184" fill="#fff" stroke="#fff" textLength="34.7" lengthAdjust="spacingAndGlyphs">ADX(14)</text>
<text x="33.2" y="184" fill="#fff" stroke="#fff" textLength="23" lengthAdjust="spacingAndGlyphs">28.02</text>
<text x="59.3" y="184" fill="#fff" stroke="#fff" textLength="23" lengthAdjust="spacingAndGlyphs">26.61</text>
<text x="85.5" y="184" fill="#fff" stroke="#fff" textLength="23" lengthAdjust="spacingAndGlyphs">11.13</text>
<text x="-4.6" y="229" fill="#fff" stroke="#fff" textLength="31.9" lengthAdjust="spacingAndGlyphs">RSI(14)</text>
<text x="30.6" y="229" fill="#fff" stroke="#fff" textLength="23" lengthAdjust="spacingAndGlyphs">49.01</text>
<text x="-3.9" y="274" fill="#fff" stroke="#fff" textLength="34.3" lengthAdjust="spacingAndGlyphs">ATR(50)</text>
<text x="33.6" y="274" fill="#fff" stroke="#fff" textLength="23" lengthAdjust="spacingAndGlyphs">16.14</text>
<text x="-3.9" y="319" fill="#fff" stroke="#fff" textLength="34.3" lengthAdjust="spacingAndGlyphs">ATR(14)</text>
<text x="33.6" y="319" fill="#fff" stroke="#fff" textLength="23" lengthAdjust="spacingAndGlyphs">17.94</text>
</svg>
</div>
<div class="a" style="left:1082px;top:77px;width:1px;height:304px;background:#fff"></div>
<div class="a" style="left:0px;top:380px;width:1083px;height:1px;background:#fff"></div>
<div class="a" style="left:1086px;top:77px;width:260px;height:1px;background:#a0a0a0"></div>
<div class="a" style="left:1086px;top:78px;width:260px;height:17px;background:#bfcddb"></div>
<div class="t" style="left:1089.90px;top:79px;letter-spacing:-0.080px">Data Window</div>
<svg class="a" style="left:1331px;top:82px" width="10" height="10" viewBox="0 0 10 10"><path d="M1.200 1.200l7.600 6.700M8.800 1.200l-7.600 6.700" stroke="#000" stroke-width="1.600" fill="none"/></svg>
<div class="a" style="left:1086px;top:77px;width:260px;height:303px;overflow:hidden">
<div class="a" style="left:-1086px;top:-77px;width:1354px;height:712px">
<div class="a r" style="top:97px;background:#fff"></div>
<svg class="a" style="left:1088px;top:98px" width="16" height="16" viewBox="0 0 16 16" fill="none"><path d="M0.5 1v14.500h14" stroke="#8c8c8c" shape-rendering="crispEdges"/><path d="M2.300 8.500l3.400-3.300 3.800 4.200 4.400-4.100" stroke="#1a73c8" stroke-width="1.300"/></svg>
<div class="t" style="left:1107.10px;top:99px;letter-spacing:-0.833px">GOLD,H1</div>
<div class="a r" style="top:117px;background:#ebebeb"></div>
<div class="t" style="left:1107.10px;top:119px">Date</div>
<div class="a v" style="left:1215px;top:117px;height:19px"></div>
<div class="t" style="left:1271.30px;top:119px;letter-spacing:-0.367px;font-size:11.5px">2025.11.28</div>
<div class="a r" style="top:137px;background:#fff"></div>
<div class="t" style="left:1107.10px;top:139px">Time</div>
<div class="a v" style="left:1215px;top:137px;height:19px"></div>
<div class="t" style="left:1297.50px;top:139px;letter-spacing:-0.375px;font-size:11.5px">17:00</div>
<div class="a r" style="top:157px;background:#ebebeb"></div>
<div class="t" style="left:1107.10px;top:159px;letter-spacing:-0.233px">Open</div>
<div class="a v" style="left:1215px;top:157px;height:19px"></div>
<div class="t" style="left:1286.00px;top:159px;letter-spacing:-0.500px;font-size:11.5px">4197.90</div>
<div class="a r" style="top:177px;background:#fff"></div>
<div class="t" style="left:1107.10px;top:179px;letter-spacing:0.867px">High</div>
<div class="a v" style="left:1215px;top:177px;height:19px"></div>
<div class="t" style="left:1286.00px;top:179px;letter-spacing:-0.500px;font-size:11.5px">4203.87</div>
<div class="a r" style="top:197px;background:#ebebeb"></div>
<div class="t" style="left:1107.10px;top:199px;letter-spacing:0.300px">Low</div>
<div class="a v" style="left:1215px;top:197px;height:19px"></div>
<div class="t" style="left:1286.50px;top:199px;letter-spacing:-0.583px;font-size:11.5px">4185.61</div>
<div class="a r" style="top:217px;background:#fff"></div>
<div class="t" style="left:1107.10px;top:219px;letter-spacing:-0.525px">Close</div>
<div class="a v" style="left:1215px;top:217px;height:19px"></div>
<div class="t" style="left:1286.00px;top:219px;letter-spacing:-0.500px;font-size:11.5px">4203.62</div>
<div class="a r" style="top:237px;background:#ebebeb"></div>
<div class="t" style="left:1107.10px;top:239px;letter-spacing:-0.130px">Tick Volume</div>
<div class="a v" style="left:1215px;top:237px;height:19px"></div>
<div class="t" style="left:1295.10px;top:239px;letter-spacing:-0.275px;font-size:11.5px">16110</div>
<div class="a r" style="top:257px;background:#fff"></div>
<div class="t" style="left:1107.10px;top:259px;letter-spacing:-0.520px">Spread</div>
<div class="a v" style="left:1215px;top:257px;height:19px"></div>
<div class="t" style="left:1313.20px;top:259px;letter-spacing:-1.200px;font-size:11.5px">30</div>
<div class="a r" style="top:277px;background:#ebebeb"></div>
<svg class="a" style="left:1088px;top:278px" width="16" height="16" viewBox="0 0 16 16" fill="none"><path d="M1 10.700l13.200-4.300" stroke="#2db52d" stroke-width="1.200" stroke-dasharray="3.200 1.600"/><path d="M1.600 13.500C2.600 11.500 3.700 6 5.600 6S7.700 11.400 9.600 11.400 12.200 6.800 13.400 4" stroke="#1a73c8" stroke-width="1.250" stroke-dasharray="1.300 1.200 14.500 1.200 3"/></svg>
<div class="t" style="left:1107.10px;top:279px;letter-spacing:0.040px">MA(50)</div>
<div class="a v" style="left:1215px;top:277px;height:19px"></div>
<div class="t" style="left:1280.40px;top:279px;letter-spacing:-0.486px;font-size:11.5px">4165.100</div>
<div class="a r" style="top:297px;background:#fff"></div>
<svg class="a" style="left:1088px;top:298px" width="16" height="16" viewBox="0 0 16 16" fill="none"><path d="M1 10.700l13.200-4.300" stroke="#2db52d" stroke-width="1.200" stroke-dasharray="3.200 1.600"/><path d="M1.600 13.500C2.600 11.500 3.700 6 5.600 6S7.700 11.400 9.600 11.400 12.200 6.800 13.400 4" stroke="#1a73c8" stroke-width="1.250" stroke-dasharray="1.300 1.200 14.500 1.200 3"/></svg>
<div class="t" style="left:1107.10px;top:299px;letter-spacing:-0.167px">MA(200)</div>
<div class="a v" style="left:1215px;top:297px;height:19px"></div>
<div class="t" style="left:1280.40px;top:299px;letter-spacing:-0.486px;font-size:11.5px">4124.752</div>
<div class="a r" style="top:317px;background:#ebebeb"></div>
<svg class="a" style="left:1088px;top:318px" width="16" height="16" viewBox="0 0 16 16" fill="none"><path d="M0.5 1v14.500h14" stroke="#8c8c8c" shape-rendering="crispEdges"/><path d="M2.300 8.500l3.400-3.300 3.800 4.200 4.400-4.100" stroke="#1a73c8" stroke-width="1.300"/></svg>
<div class="t" style="left:1107.10px;top:319px;letter-spacing:0.100px">Indicator window 1</div>
<div class="a r" style="top:337px;background:#fff"></div>
<svg class="a" style="left:1088px;top:338px" width="16" height="16" viewBox="0 0 16 16" fill="none"><path d="M1 10.700l13.200-4.300" stroke="#2db52d" stroke-width="1.200" stroke-dasharray="3.200 1.600"/><path d="M1.600 13.500C2.600 11.500 3.700 6 5.600 6S7.700 11.400 9.600 11.400 12.200 6.800 13.400 4" stroke="#1a73c8" stroke-width="1.250" stroke-dasharray="1.300 1.200 14.500 1.200 3"/></svg>
<div class="t" style="left:1107.10px;top:339px;letter-spacing:-0.650px">ADX(14)</div>
<div class="a v" style="left:1215px;top:337px;height:19px"></div>
<div class="t" style="left:1298.50px;top:339px;letter-spacing:-0.625px;font-size:11.5px">24.80</div>
<div class="a r" style="top:357px;background:#ebebeb"></div>
<svg class="a" style="left:1088px;top:358px" width="16" height="16" viewBox="0 0 16 16" fill="none"><path d="M1 10.700l13.200-4.300" stroke="#2db52d" stroke-width="1.200" stroke-dasharray="3.200 1.600"/><path d="M1.600 13.500C2.600 11.500 3.700 6 5.600 6S7.700 11.400 9.600 11.400 12.200 6.800 13.400 4" stroke="#1a73c8" stroke-width="1.250" stroke-dasharray="1.300 1.200 14.500 1.200 3"/></svg>
<div class="t" style="left:1107.10px;top:359px;letter-spacing:-0.150px">+DI</div>
<div class="a v" style="left:1215px;top:357px;height:19px"></div>
<div class="t" style="left:1298.50px;top:359px;letter-spacing:-0.625px;font-size:11.5px">24.50</div>
<div class="a r" style="top:377px;background:#fff"></div>
<div class="a v" style="left:1215px;top:377px;height:19px"></div>
</div></div>
<div class="a" style="left:1329px;top:97px;width:1px;height:283px;background:#fff"></div>
<div class="a" style="left:1330px;top:96px;width:16px;height:284px;background:#f0f0f0"></div>
<div class="a" style="left:1330px;top:114px;width:15px;height:166px;background:#cdcdcd"></div>
<svg class="a" style="left:1329px;top:96px" width="17" height="284" viewBox="0 0 17 284" fill="none" stroke="#5a5a5a" stroke-width="2.100"><path d="M4.900 11.900l3.400-3.400 3.400 3.400"/><path d="M4.900 273.700l3.400 3.400 3.400-3.400"/></svg>
<div class="a" style="left:0px;top:384px;width:1346px;height:1px;background:#a0a0a0"></div>
<div class="a" style="left:0px;top:385px;width:1346px;height:327px;background:#fff"></div>
<div class="a" style="left:0px;top:385px;width:6px;height:327px;background:#bfcddb"></div>
<div class="a" style="left:0;top:385px;width:6px;height:327px;overflow:hidden"><div class="t" style="left:-10.200px;top:325px;transform-origin:0 0;transform:rotate(-90deg)">Toolbox</div><svg class="a" style="left:0;top:6px" width="6" height="10" viewBox="0 0 6 10"><path d="M-4 1.200l5.500 7.400M1.500 1.200l-5.500 7.400" stroke="#000" stroke-width="1.600" fill="none"/></svg></div>
<div class="t" style="left:14.20px;top:389px;letter-spacing:-0.140px">Symbol</div>
<div class="a h" style="left:130px"></div>
<div class="t" style="left:137.90px;top:389px;letter-spacing:-0.480px">Ticket</div>
<div class="a h" style="left:215px"></div>
<div class="t" style="left:305.50px;top:389px;letter-spacing:-0.500px">Time</div>
<div class="a h" style="left:335px"></div>
<div class="t" style="left:430.80px;top:389px;letter-spacing:-1.267px">Type</div>
<div class="a h" style="left:458px"></div>
<div class="t" style="left:507.80px;top:389px;letter-spacing:-0.160px">Volume</div>
<div class="a h" style="left:552px"></div>
<div class="t" style="left:614.50px;top:389px;letter-spacing:-0.125px">Price</div>
<div class="a h" style="left:646px"></div>
<div class="t" style="left:712.60px;top:389px;letter-spacing:-0.650px">S / L</div>
<div class="a h" style="left:740px"></div>
<div class="t" style="left:805.60px;top:389px;letter-spacing:-0.400px">T / P</div>
<div class="a h" style="left:834px"></div>
<div class="t" style="left:896.50px;top:389px;letter-spacing:-0.125px">Price</div>
<div class="a h" style="left:928px"></div>
<div class="t" style="left:989.10px;top:389px;letter-spacing:-0.700px">Swap</div>
<div class="a h" style="left:1022px"></div>
<div class="t" style="left:1091.60px;top:389px;letter-spacing:0.280px">Profit</div>
<div class="a h" style="left:1126px"></div>
<div class="t" style="left:1286.80px;top:389px;letter-spacing:0.200px">Comment</div>
<div class="a" style="left:8px;top:409px;width:1338px;height:20px;background:#c8c8c8"></div>
<div class="t" style="left:15.80px;top:410.8px;letter-spacing:-0.250px;font-size:10px">•</div>
<div class="t" style="left:29.80px;top:411px;letter-spacing:-0.192px;font-weight:bold">Balance: 1 317 797.67 USD</div>
<div class="t" style="left:184.90px;top:411px;letter-spacing:-0.189px;font-weight:bold">Equity: 1 317 797.67</div>
<div class="t" style="left:302.90px;top:411px;letter-spacing:-0.067px;font-weight:bold">Free Margin: 1 317 797.67</div>
<div class="t" style="left:1099.60px;top:411px;letter-spacing:0.467px;font-weight:bold;font-size:11.5px">0.00</div>
<div class="a" style="left:8px;top:691px;width:1338px;height:21px;background:#f0f0f0"></div>
<div class="a" style="left:8px;top:690px;width:1338px;height:1px;background:#000"></div>
<div class="a" style="left:13px;top:690px;width:48px;height:20px;background:#fff;border:1px solid #000;border-top:0"></div>
<div class="t" style="left:23.00px;top:692px;letter-spacing:-0.725px">Trade</div>
<div class="t" style="left:70.60px;top:692px;letter-spacing:0.017px;color:#6d6d6d">History</div>
<div class="a" style="left:119px;top:694px;width:1px;height:14px;background:#6d6d6d"></div>
<div class="t" style="left:129.40px;top:692px;letter-spacing:-0.189px;color:#6d6d6d">Operations</div>
<div class="a" style="left:197px;top:694px;width:1px;height:14px;background:#6d6d6d"></div>
<div class="t" style="left:206.80px;top:692px;letter-spacing:-0.200px;color:#6d6d6d">Journal</div>
<div id="blue" class="a"></div>
</body></html>
